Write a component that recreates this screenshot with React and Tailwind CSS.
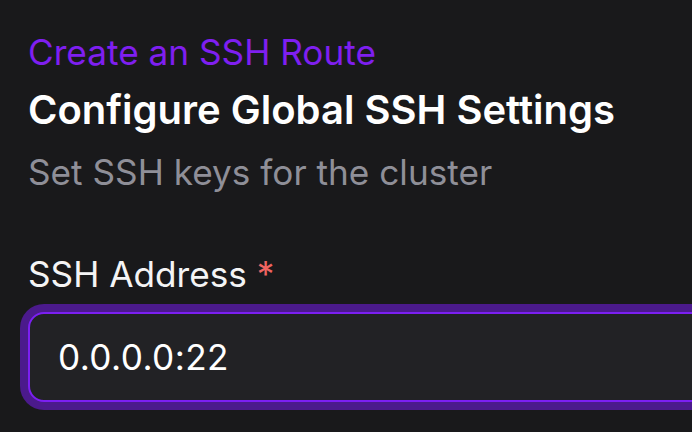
import React, { useState } from "react";

const App = () => {
  const [address, setAddress] = useState("0.0.0.0:22");

  return (
    <div
      className="min-h-[432px] w-full overflow-hidden bg-[#19191b] pl-[28px] pt-[26px]"
      style={{ fontFamily: "Inter, 'Noto Sans', sans-serif" }}
    >
      <div className="text-[35.2px] leading-[52.8px] text-[#7f1ff0]">
        Create an SSH Route
      </div>
      <h1 className="mt-[3px] text-[40px] font-semibold leading-[56px] text-white">
        Configure Global SSH Settings
      </h1>
      <p className="mt-[8px] text-[35.2px] leading-[52.8px] text-[#8f8f98]">
        Set SSH keys for the cluster
      </p>

      <label
        htmlFor="ssh_address"
        className="mt-[49px] block text-[35.2px] leading-[52.8px] text-[#f4f4f5]"
      >
        SSH Address <span className="text-[#ef6461]">*</span>
      </label>
      <input
        id="ssh_address"
        type="text"
        value={address}
        onChange={(e) => setAddress(e.target.value)}
        className="mt-[12px] block h-[90px] w-[720px] rounded-2xl border-2 border-[#7c1ff2] bg-[#222225] px-7 text-[35.2px] tracking-[0.4px] text-white shadow-[0_0_0_8px_#4b1a8c] outline-none"
      />
    </div>
  );
};

export default App;
